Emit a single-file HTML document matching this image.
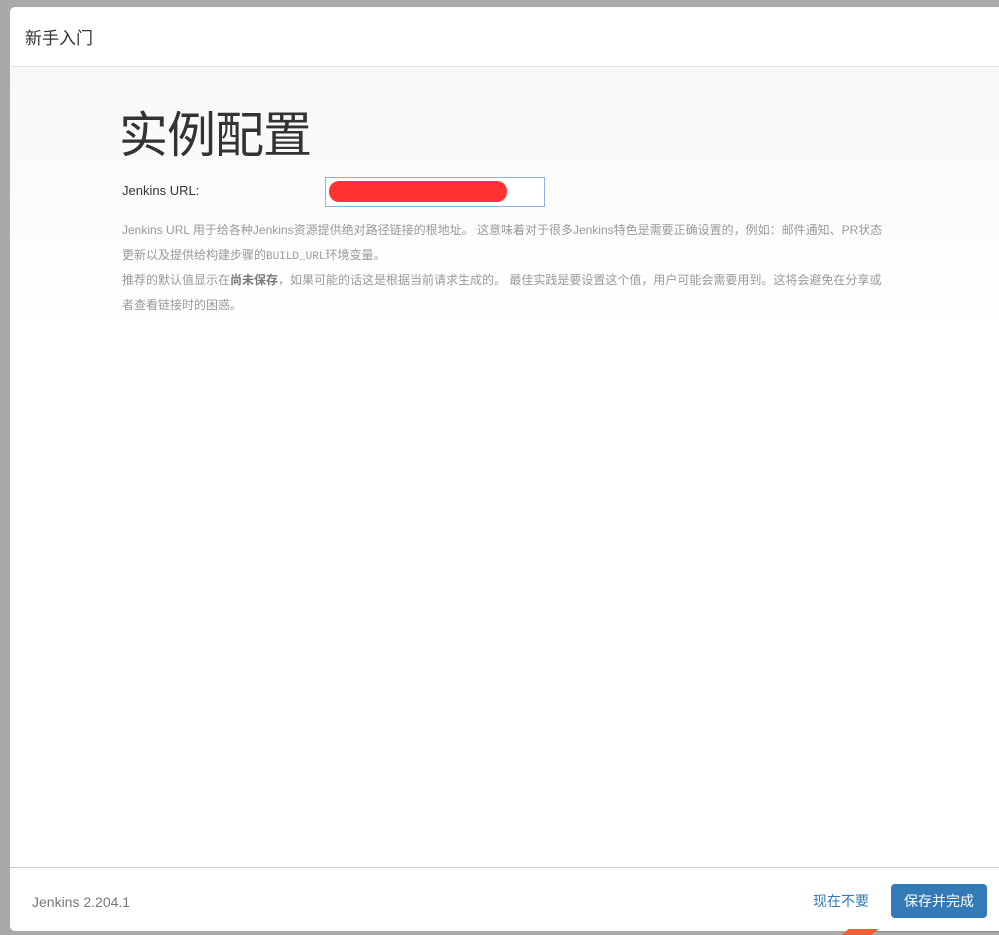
<!DOCTYPE html>
<html><head><meta charset="utf-8"><style>
html,body{margin:0;padding:0;width:999px;height:935px;overflow:hidden;background:#a9a9a9;font-family:"Liberation Sans","Noto Sans CJK SC",sans-serif;}
.modal{position:absolute;left:10px;top:7px;width:1000px;height:924px;background:#fff;border-radius:5px;overflow:hidden;}
.hdr{height:59px;border-bottom:1px solid #e5e5e5;}
.hdr span{position:absolute;left:15px;top:17px;font-size:17px;color:#333;}
.body{position:absolute;top:60px;left:0;right:0;height:800px;background:linear-gradient(#f8f8f8,#fff 260px);}
h1{position:absolute;left:109px;top:39px;margin:0;font-size:49px;line-height:60px;font-weight:normal;color:#333;letter-spacing:-1px;}
.lbl{position:absolute;left:112px;top:116px;font-size:13px;color:#333;}
.inp{position:absolute;left:315px;top:110px;width:218px;height:28px;border:1px solid #8eb3e6;background:#fff;}
.red{position:absolute;left:3px;top:3px;width:178px;height:21px;background:#f33;border-radius:10px;}
.help{position:absolute;left:112px;top:151px;font-size:12px;color:#999;white-space:nowrap;}
.help div{height:25px;line-height:25px;}
.help b{color:#777;}
.mono{font-family:"Liberation Mono",monospace;font-size:11px;}
.ftr{position:absolute;top:860px;left:0;right:0;height:64px;border-top:1px solid #ccc;}
.ver{position:absolute;left:22px;top:26px;font-size:14px;color:#777;}
.skip{position:absolute;left:803px;top:23px;font-size:14px;color:#337ab7;}
.btn{position:absolute;left:881px;top:16px;width:96px;height:34px;background:#337ab7;border-radius:4px;color:#fff;font-size:14px;text-align:center;line-height:34px;}
.arrow{position:absolute;left:845px;top:929px;width:30px;height:6px;background:#f06030;transform:skewX(-50deg);}
.line2{position:absolute;left:875px;top:931px;width:124px;height:1px;background:#888;}
</style></head><body>
<div class="modal">
 <div class="hdr"><span>新手入门</span></div>
 <div class="body">
  <h1>实例配置</h1>
  <div class="lbl">Jenkins URL:</div>
  <div class="inp"><div class="red"></div></div>
  <div class="help"><div>Jenkins URL 用于给各种Jenkins资源提供绝对路径链接的根地址。 这意味着对于很多Jenkins特色是需要正确设置的，例如：邮件通知、PR状态</div><div>更新以及提供给构建步骤的<span class="mono">BUILD_URL</span>环境变量。</div><div>推荐的默认值显示在<b>尚未保存</b>，如果可能的话这是根据当前请求生成的。 最佳实践是要设置这个值，用户可能会需要用到。这将会避免在分享或</div><div>者查看链接时的困惑。</div></div>
 </div>
 <div class="ftr">
  <div class="ver">Jenkins 2.204.1</div>
  <div class="skip">现在不要</div>
  <div class="btn">保存并完成</div>
 </div>
</div>
<div class="line2"></div>
<div class="arrow"></div>
</body></html>
